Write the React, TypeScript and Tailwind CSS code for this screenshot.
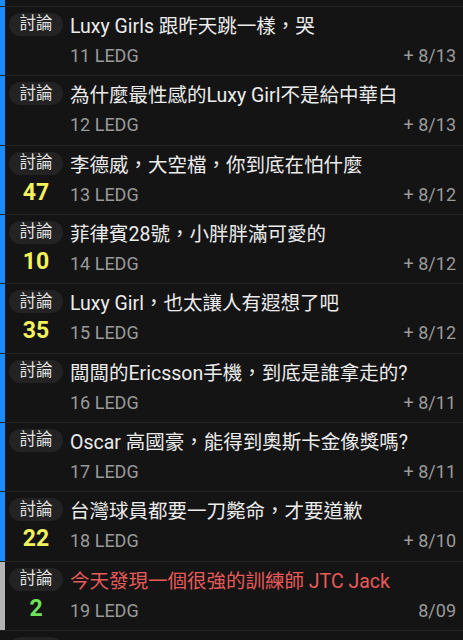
const rows = [
  { title: "Luxy Girls 跟昨天跳一樣，哭", n: 11, date: "+ 8/13" },
  { title: "為什麼最性感的Luxy Girl不是給中華白", n: 12, date: "+ 8/13" },
  { title: "李德威，大空檔，你到底在怕什麼", n: 13, date: "+ 8/12", push: "47", pc: "text-[#f4f25c]" },
  { title: "菲律賓28號，小胖胖滿可愛的", n: 14, date: "+ 8/12", push: "10", pc: "text-[#f4f25c]" },
  { title: "Luxy Girl，也太讓人有遐想了吧", n: 15, date: "+ 8/12", push: "35", pc: "text-[#f4f25c]" },
  { title: "闆闆的Ericsson手機，到底是誰拿走的?", n: 16, date: "+ 8/11" },
  { title: "Oscar 高國豪，能得到奧斯卡金像獎嗎?", n: 17, date: "+ 8/11" },
  { title: "台灣球員都要一刀斃命，才要道歉", n: 18, date: "+ 8/10", push: "22", pc: "text-[#f4f25c]" },
  { title: "今天發現一個很強的訓練師 JTC Jack", n: 19, date: "8/09", push: "2", pc: "text-[#6ee35a]", red: true, read: true },
];

function Badge({ label = "討論" }: { label?: string }) {
  return (
    <div className="w-[54px] h-[23px] rounded-full bg-[#232323] flex items-center justify-center text-[16.5px] text-[#e2e2e2] leading-none">
      {label}
    </div>
  );
}

export default function App() {
  return (
    <div
      className="w-[463px] h-[640px] overflow-hidden bg-[#141414]"
      style={{ fontFamily: 'Roboto, "Noto Sans CJK TC", sans-serif' }}
    >
      <div className="h-[7px] flex border-b border-[#232323]">
        <div className="w-[5px] bg-[#1a8cff]" />
      </div>
      {rows.map((r) => (
        <div key={r.n} className="h-[69.33px] flex border-b border-[#232323]">
          <div className={`w-[5px] shrink-0 ${r.read ? "bg-[#b4b4b4]" : "bg-[#1a8cff]"}`} />
          <div className="w-[62px] shrink-0 flex flex-col items-center pt-[6px]">
            <Badge />
            {r.push && (
              <div className={`mt-[6px] text-[23px] font-bold leading-none ${r.pc}`}>{r.push}</div>
            )}
          </div>
          <div className="flex-1 flex flex-col pl-[3px] pr-[7px] pt-[6px]">
            <div className={`text-[19.5px] leading-[27px] whitespace-nowrap ${r.red ? "text-[#e85a5a]" : "text-[#ececec]"}`}>
              {r.title}
            </div>
            <div className="mt-[3px] flex justify-between text-[18px] leading-[26px] text-[#9a9a9a]">
              <span>{r.n} LEDG</span>
              <span>{r.date}</span>
            </div>
          </div>
        </div>
      ))}
      <div className="h-[20px] flex">
        <div className="w-[5px]" />
        <div className="w-[62px] flex justify-center pt-[6px]">
          <Badge label="" />
        </div>
      </div>
    </div>
  );
}
